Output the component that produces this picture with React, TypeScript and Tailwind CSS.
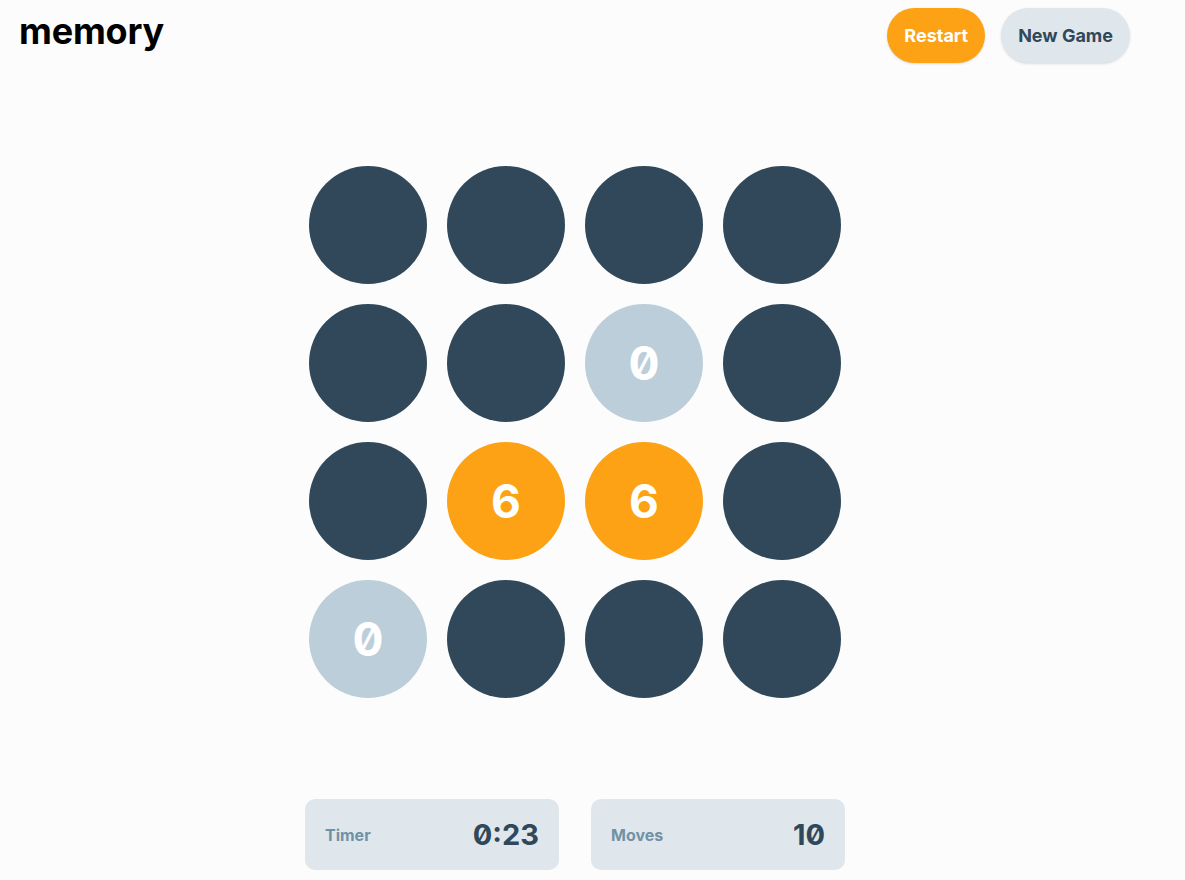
import React from "react";

type Tile = { value: number; state: "hidden" | "open" | "matched" };

// board as it stands in the screenshot
const tiles: Tile[] = [
  { value: 1, state: "hidden" },
  { value: 2, state: "hidden" },
  { value: 3, state: "hidden" },
  { value: 4, state: "hidden" },
  { value: 5, state: "hidden" },
  { value: 7, state: "hidden" },
  { value: 0, state: "matched" },
  { value: 1, state: "hidden" },
  { value: 2, state: "hidden" },
  { value: 6, state: "open" },
  { value: 6, state: "open" },
  { value: 3, state: "hidden" },
  { value: 0, state: "matched" },
  { value: 4, state: "hidden" },
  { value: 5, state: "hidden" },
  { value: 7, state: "hidden" },
];

function Circle({ tile }: { tile: Tile }) {
  const bg =
    tile.state === "open" ? "bg-[#fda214]" : tile.state === "matched" ? "bg-[#bcced9]" : "bg-[#304859]";
  return (
    <button className={`w-[118px] h-[118px] rounded-full ${bg} flex items-center justify-center text-white text-[46px] font-bold`}>
      {tile.state !== "hidden" && tile.value}
    </button>
  );
}

function Stat({ label, value }: { label: string; value: string }) {
  return (
    <div className="w-[254px] h-[71px] rounded-[10px] bg-[#dfe7ec] flex items-center justify-between px-5">
      <span className="text-[16px] font-bold text-[#7191a5]">{label}</span>
      <span className="text-[29px] font-bold text-[#304859]">{value}</span>
    </div>
  );
}

export default function App() {
  return (
    <div className="min-h-[880px] bg-[#fcfcfc] font-['Inter',sans-serif] [font-feature-settings:'zero']">
      <div className="w-[1150px] flex flex-col">
        <header className="flex items-start justify-between pl-[19px] pr-5 pt-2">
          <h1 className="text-[36px] font-bold text-black tracking-[-0.2px] mt-[5px] leading-none">memory</h1>
          <nav className="flex gap-4">
            <button className="h-[55px] px-[17px] rounded-full bg-[#fda214] text-white text-[18px] font-bold shadow-sm">
              Restart
            </button>
            <button className="h-[55px] px-[17px] rounded-full bg-[#dfe7ec] text-[#304859] text-[18px] font-bold shadow-sm">
              New Game
            </button>
          </nav>
        </header>

        <main className="flex flex-col items-center">
          <section className="grid grid-cols-4 gap-5 mt-[103px]">
            {tiles.map((t, i) => (
              <Circle key={i} tile={t} />
            ))}
          </section>

          <footer className="flex gap-8 mt-[101px]">
            <Stat label="Timer" value="0:23" />
            <Stat label="Moves" value="10" />
          </footer>
        </main>
      </div>
    </div>
  );
}
